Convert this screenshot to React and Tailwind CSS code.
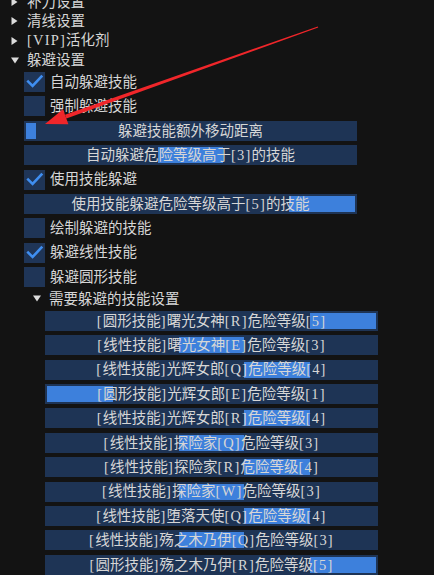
import React from "react";

const FONT = { fontFamily: '"Liberation Serif", "Noto Sans CJK SC", serif' };

function Txt({ children }) {
  const parts = String(children).split(/([\x20-\x7e]+)/).filter(Boolean);
  return (
    <>
      {parts.map((p, i) =>
        /^[\x20-\x7e]+$/.test(p) ? (
          <span key={i} className="tracking-[1.2px]">{p}</span>
        ) : (
          <span key={i}>{p}</span>
        )
      )}
    </>
  );
}

function TreeNode({ label, open, indent }) {
  return (
    <div className={`flex h-[15px] items-center shrink-0 ${indent ? "pl-[33px]" : "pl-[11px]"}`}>
      <div className="w-[15px] flex items-center">
        {open ? (
          <svg width="8" height="7" viewBox="0 0 8 7">
            <polygon points="0,0.5 8,0.5 4,6.5" fill="#dcdcdc" />
          </svg>
        ) : (
          <svg width="7" height="8" viewBox="0 0 7 8">
            <polygon points="0.5,0 6.5,4 0.5,8" fill="#dcdcdc" />
          </svg>
        )}
      </div>
      <span className="ml-[1px] text-[14.5px] leading-none text-[#d6d6d6] whitespace-nowrap"><Txt>{label}</Txt></span>
    </div>
  );
}

function Checkbox({ label, checked }) {
  return (
    <div className="flex h-[20px] items-center shrink-0 pl-[24px]">
      <div className="w-[21px] h-[20px] bg-[#1f3557] flex items-center justify-center">
        {checked && (
          <svg width="21" height="20" viewBox="0 0 21 20">
            <path d="M4.2 9.6 L8.6 14 L17.4 4.6" stroke="#3f8ef0" strokeWidth="2.6" fill="none" strokeLinecap="square" />
          </svg>
        )}
      </div>
      <span className="ml-[5px] text-[14.5px] leading-none text-[#d6d6d6] whitespace-nowrap"><Txt>{label}</Txt></span>
    </div>
  );
}

function Slider({ label, value, indent, grabLeft, grabWidth }) {
  const inner = 329;
  let left, width;
  if (grabWidth !== undefined) {
    left = grabLeft;
    width = grabWidth;
  } else {
    width = inner / 5;
    left = ((value - 1) / 4) * (inner - width);
  }
  return (
    <div className={`flex h-[20px] items-center shrink-0 ${indent ? "pl-[45px]" : "pl-[24px]"}`}>
      <div className="relative w-[333px] h-[20px] bg-[#1e3455] flex items-center justify-center">
        <div
          className="absolute top-[2px] bottom-[2px] bg-[#3d80dc]"
          style={{ left: 2 + left, width }}
        />
        <span className="relative text-[14.5px] leading-none text-[#d6d6d6] whitespace-nowrap"><Txt>{label}</Txt></span>
      </div>
    </div>
  );
}

export default function App() {
  const skills = [
    ["[圆形技能]曙光女神[R]危险等级[5]", 5],
    ["[线性技能]曙光女神[E]危险等级[3]", 3],
    ["[线性技能]光辉女郎[Q]危险等级[4]", 4],
    ["[圆形技能]光辉女郎[E]危险等级[1]", 1],
    ["[线性技能]光辉女郎[R]危险等级[4]", 4],
    ["[线性技能]探险家[Q]危险等级[3]", 3],
    ["[线性技能]探险家[R]危险等级[4]", 4],
    ["[线性技能]探险家[W]危险等级[3]", 3],
    ["[线性技能]堕落天使[Q]危险等级[4]", 4],
    ["[线性技能]殇之木乃伊[Q]危险等级[3]", 3],
    ["[圆形技能]殇之木乃伊[R]危险等级[5]", 5],
  ];
  return (
    <div className="relative w-[434px] h-[575px] overflow-hidden bg-[#131313]" style={FONT}>
      <div className="flex flex-col gap-[4.4px] mt-[-5.6px]">
        <TreeNode label="补刀设置" />
        <TreeNode label="清线设置" />
        <TreeNode label="[VIP]活化剂" />
        <TreeNode label="躲避设置" open />
        <Checkbox label="自动躲避技能" checked />
        <Checkbox label="强制躲避技能" />
        <Slider label="躲避技能额外移动距离" grabLeft={0} grabWidth={10} />
        <Slider label="自动躲避危险等级高于[3]的技能" value={3} />
        <Checkbox label="使用技能躲避" checked />
        <Slider label="使用技能躲避危险等级高于[5]的技能" value={5} />
        <Checkbox label="绘制躲避的技能" />
        <Checkbox label="躲避线性技能" checked />
        <Checkbox label="躲避圆形技能" />
        <TreeNode label="需要躲避的技能设置" open indent />
        {skills.map(([l, v]) => (
          <Slider key={l} label={l} value={v} indent />
        ))}
      </div>
      <svg className="absolute inset-0 pointer-events-none" width="434" height="575" viewBox="0 0 434 575">
        <polygon points="318.2,27.6 317.8,26.4 65.0,114.8 66.4,118.6" fill="#f0262a" />
        <polygon points="45,124 68.4,124.2 63.0,109.2" fill="#f0262a" />
      </svg>
    </div>
  );
}
